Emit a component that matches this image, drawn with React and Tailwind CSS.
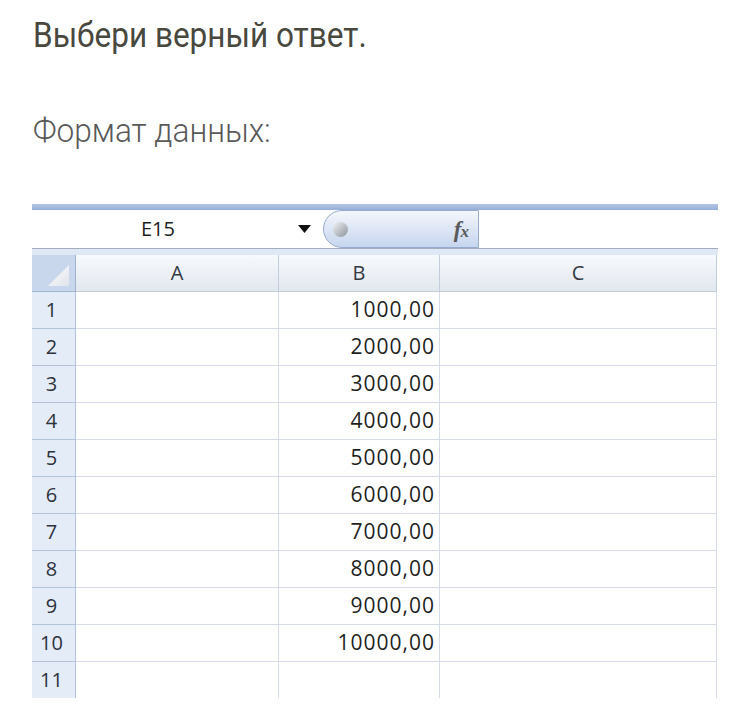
export default function App() {
  const rows = [
    "1000,00",
    "2000,00",
    "3000,00",
    "4000,00",
    "5000,00",
    "6000,00",
    "7000,00",
    "8000,00",
    "9000,00",
    "10000,00",
    "",
  ];
  const xl = { fontFamily: '"Open Sans", "Noto Sans", sans-serif' };
  return (
    <div className="w-[729px] h-[718px] bg-white overflow-hidden">
      <div className="pl-[33px] pt-[15px]" style={{ fontFamily: 'Roboto, "Noto Sans", sans-serif' }}>
        <div className="text-[35px] leading-[42px] text-[#48483f] whitespace-nowrap origin-left scale-x-[0.9]">
          Выбери верный ответ.
        </div>
        <div className="mt-[53px] text-[34px] leading-[41px] font-light text-[#595959] whitespace-nowrap origin-left scale-x-[0.93]">
          Формат данных:
        </div>
      </div>

      <div className="ml-[32px] mt-[53px] w-[686px] h-[494px] overflow-hidden" style={xl}>
        <div className="h-[6px] bg-gradient-to-b from-[#b4c6e4] to-[#95aed8]" />
        <div className="h-[39px] flex border-b border-[#a3adbd]">
          <div className="w-[252px] flex items-center justify-center text-[20px] text-[#1e1e1e]">E15</div>
          <div className="w-[39px] flex items-center pl-[14px]">
            <svg width="13" height="8" viewBox="0 0 13 8">
              <polygon points="0,0 13,0 6.5,8" fill="#111" />
            </svg>
          </div>
          <div className="w-[156px] h-[38px] flex items-center justify-between rounded-l-full border border-r border-[#97abcf] bg-gradient-to-b from-[#f4f7fc] to-[#c6d5ee] pl-[9px] pr-[10px]">
            <div className="w-[15px] h-[15px] rounded-full bg-gradient-to-br from-[#f2f2f2] via-[#bfc3c8] to-[#8f959c]" />
            <span
              className="text-[23px] italic font-bold text-[#5a5a5a] leading-none tracking-[-1px]"
              style={{ fontFamily: '"Liberation Serif", "DejaVu Serif", serif' }}
            >
              f<span className="text-[17px]">x</span>
            </span>
          </div>
          <div className="flex-1 bg-white" />
        </div>
        <div className="h-[6px] bg-[#dfe8f5]" />
        <div className="grid grid-cols-[44px_203px_161px_277px]">
          <div className="h-[37px] relative bg-[#c8d7eb] border-r border-b border-[#9fb5cf]">
            <svg className="absolute right-[6px] bottom-[5px]" width="21" height="21" viewBox="0 0 21 21">
              <defs>
                <linearGradient id="tri" x1="0" y1="0" x2="1" y2="1">
                  <stop offset="0" stopColor="#ffffff" />
                  <stop offset="1" stopColor="#dfe4ea" />
                </linearGradient>
              </defs>
              <polygon points="21,0 21,21 0,21" fill="url(#tri)" />
            </svg>
          </div>
          {["A", "B", "C"].map((c) => (
            <div
              key={c}
              className="h-[37px] flex items-center justify-center border-r border-b border-[#c3ccda] bg-gradient-to-b from-[#f7f9fc] to-[#e2e7ef] text-[20px] text-[#333a44]"
            >
              {c}
            </div>
          ))}
          {rows.map((v, i) => (
            <Row key={i} n={i + 1} v={v} />
          ))}
        </div>
      </div>
    </div>
  );
}

function Row({ n, v }) {
  return (
    <>
      <div className="h-[37px] flex items-center justify-center pr-[4px] bg-[#e4ecf7] border-r border-b border-[#b3c3d9] text-[20px] text-[#2c333d]">
        {n}
      </div>
      <div className="h-[37px] border-r border-b border-[#d6dce7]" />
      <div className="h-[37px] flex items-center justify-end pr-[4px] border-r border-b border-[#d6dce7] text-[21px] tracking-[1px] text-[#1f1f1f]">
        {v}
      </div>
      <div className="h-[37px] border-r border-b border-[#d6dce7]" />
    </>
  );
}
